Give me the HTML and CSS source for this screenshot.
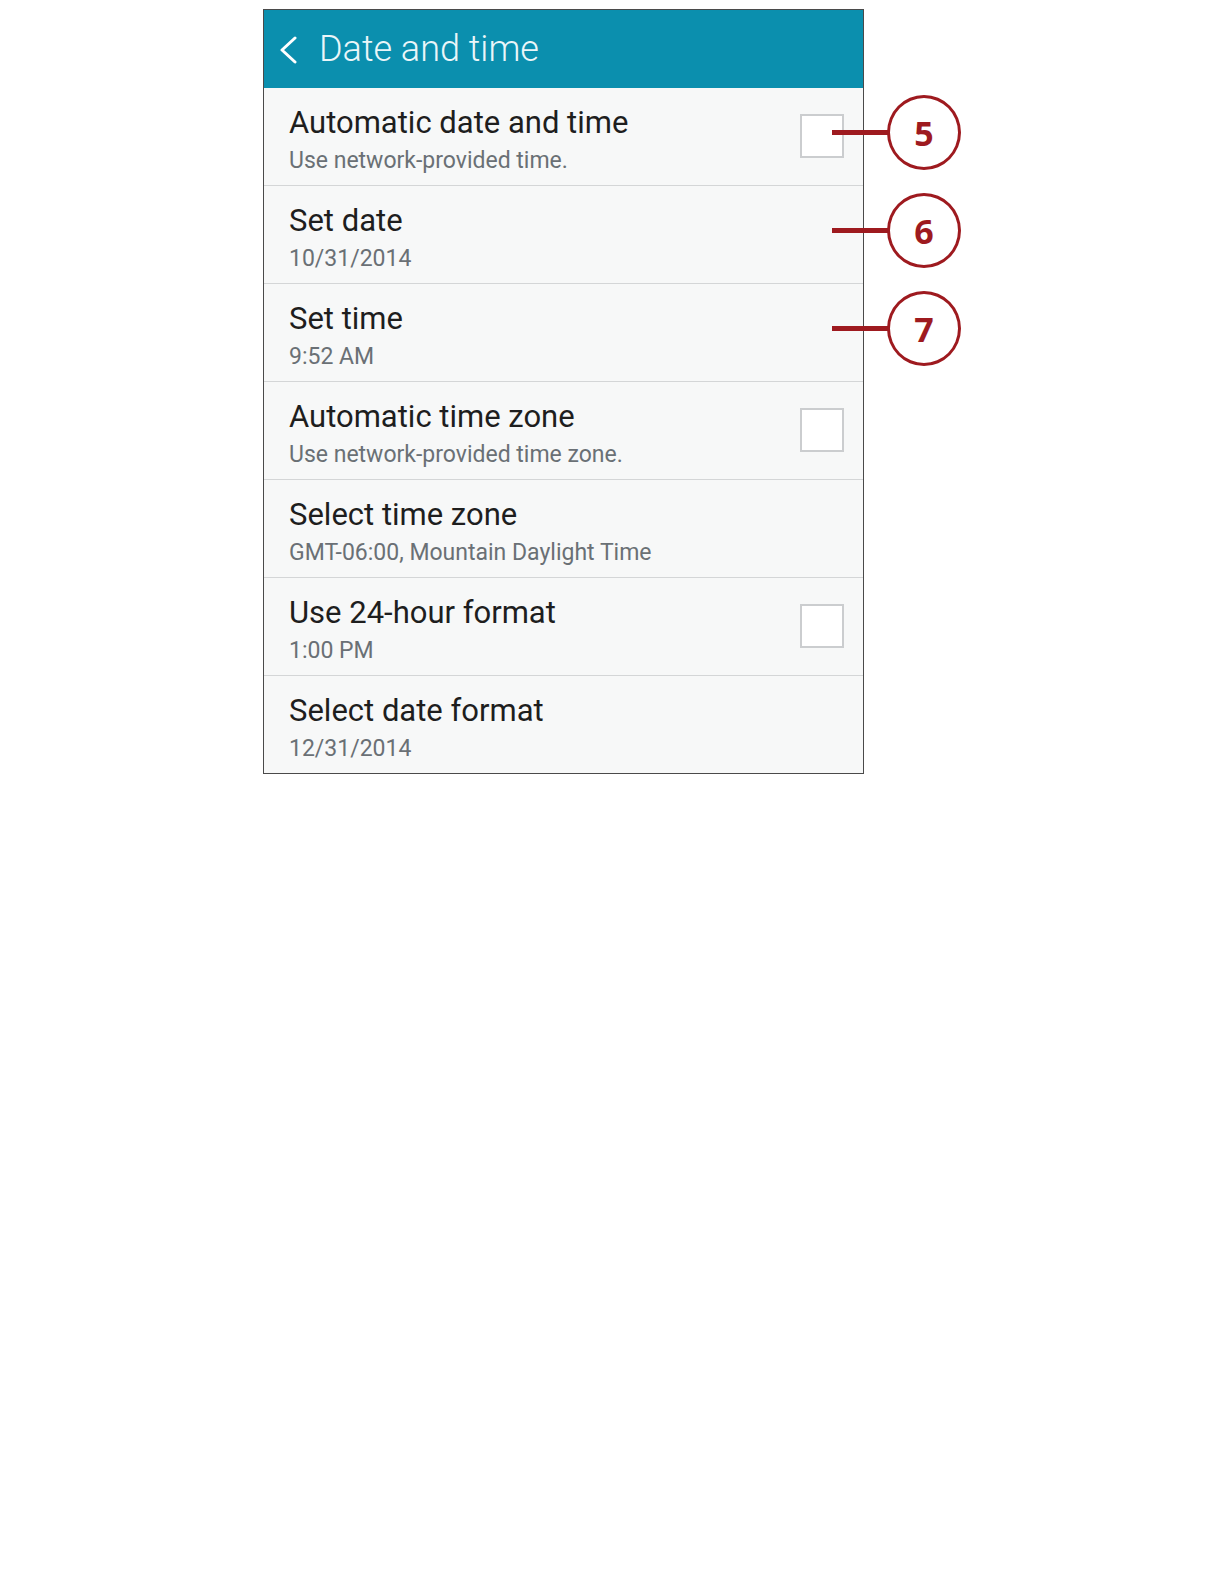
FILE: index.html
```html
<!DOCTYPE html>
<html lang="en">
<head>
<meta charset="utf-8">
<title>Date and time</title>
<link rel="stylesheet" href="styles.css">
</head>
<body>
<div class="panel">
  <div class="header">
    <svg class="back" width="20" height="28" viewBox="0 0 20 28" aria-hidden="true">
      <polyline points="17,2 4,14 17,26" fill="none" stroke="#ffffff" stroke-width="3" stroke-linecap="round" stroke-linejoin="round"/>
    </svg>
    <span class="header-title">Date and time</span>
  </div>
  <div class="row">
    <div class="text">
      <div class="title">Automatic date and time</div>
      <div class="sub">Use network-provided time.</div>
    </div>
    <div class="check"></div>
    <div class="callout"><span class="lead"></span><span class="badge">5</span></div>
  </div>
  <div class="row">
    <div class="text">
      <div class="title">Set date</div>
      <div class="sub">10/31/2014</div>
    </div>
    <div class="callout"><span class="lead"></span><span class="badge">6</span></div>
  </div>
  <div class="row">
    <div class="text">
      <div class="title">Set time</div>
      <div class="sub">9:52 AM</div>
    </div>
    <div class="callout"><span class="lead"></span><span class="badge">7</span></div>
  </div>
  <div class="row">
    <div class="text">
      <div class="title">Automatic time zone</div>
      <div class="sub">Use network-provided time zone.</div>
    </div>
    <div class="check"></div>
  </div>
  <div class="row">
    <div class="text">
      <div class="title">Select time zone</div>
      <div class="sub">GMT-06:00, Mountain Daylight Time</div>
    </div>
  </div>
  <div class="row">
    <div class="text">
      <div class="title">Use 24-hour format</div>
      <div class="sub">1:00 PM</div>
    </div>
    <div class="check"></div>
  </div>
  <div class="row last">
    <div class="text">
      <div class="title">Select date format</div>
      <div class="sub">12/31/2014</div>
    </div>
  </div>
</div>
</body>
</html>
```
FILE: styles.css
```css
* { box-sizing: border-box; }
html, body { margin: 0; padding: 0; background: #ffffff; }
body { font-family: Roboto, "Noto Sans", "Liberation Sans", sans-serif; }

.panel {
  margin: 9px 0 0 263px;
  width: 601px;
  border: 1px solid #4a4a4a;
  background: #f7f8f8;
}

.header {
  height: 78px;
  background: #0b8fae;
  display: flex;
  align-items: center;
  padding-left: 14px;
}
.back { display: block; margin-top: 1px; }
.header-title {
  margin-left: 21px;
  font-weight: 300;
  font-size: 36px;
  color: #eaf6f9;
}

.row {
  position: relative;
  height: 98px;
  border-bottom: 1px solid #d4d6d7;
  display: flex;
  align-items: flex-start;
  justify-content: space-between;
  padding: 18px 19px 0 25px;
}
.row.last { border-bottom: none; height: 97px; }

.text { display: flex; flex-direction: column; }
.title {
  font-size: 31px;
  line-height: 34px;
  color: #1e1e1e;
}
.sub {
  margin-top: 7px;
  font-size: 23px;
  line-height: 28px;
  color: #6a7075;
}

.check {
  width: 44px;
  height: 44px;
  margin-top: 8px;
  border: 2px solid #cbcdcf;
  background: #ffffff;
}

.callout {
  position: absolute;
  left: 568px;
  top: 7px;
  height: 75px;
  display: flex;
  align-items: center;
}
.lead {
  display: block;
  width: 56px;
  height: 5px;
  margin-right: -1px;
  background: #9e1a1f;
}
.badge {
  width: 74px;
  height: 75px;
  border: 3px solid #9e1a1f;
  border-radius: 50%;
  background: #ffffff;
  display: flex;
  align-items: center;
  justify-content: center;
  font-family: "Open Sans", "Noto Sans", sans-serif;
  font-weight: 700;
  font-size: 34px;
  color: #9e1a1f;
  padding-top: 1px;
}
```
